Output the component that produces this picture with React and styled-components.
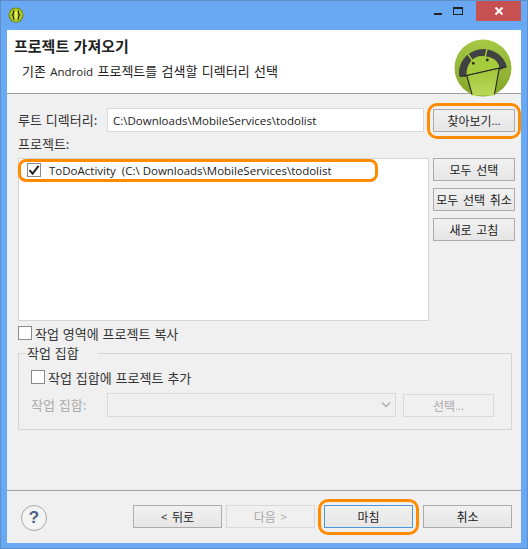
import React from "react";
import styled, { createGlobalStyle, css } from "styled-components";

const Global = createGlobalStyle`
  html, body { margin: 0; padding: 0; background: #69a9f3; }
  * { box-sizing: border-box; }
`;

const Frame = styled.div`
  width: 528px;
  height: 549px;
  background: #69a9f3;
  border: 1px solid #5f8fc9;
  display: flex;
  flex-direction: column;
  font-family: "Noto Sans CJK KR", "Open Sans", sans-serif;
  font-size: 13px;
  word-spacing: 1px;
  color: #222;
  overflow: hidden;
`;
const Latin = styled.span`
  font-family: "Open Sans", sans-serif;
  font-size: 11.5px;
  word-spacing: 0;
`;
const TitleBar = styled.div`
  height: 29px;
  flex: none;
  display: flex;
  align-items: flex-start;
  padding-left: 7px;
`;
const AppIcon = styled.svg`
  width: 16px;
  height: 16px;
  margin-top: 6px;
`;
const WindowControls = styled.div`
  margin-left: auto;
  margin-right: 6px;
  display: flex;
  align-items: flex-start;
`;
const ControlBtn = styled.div`
  width: ${(p) => p.$w}px;
  height: 20px;
  display: flex;
  align-items: center;
  justify-content: center;
  background: ${(p) => p.$bg || "transparent"};
`;
const Client = styled.div`
  width: 514px;
  height: 513px;
  margin-left: 6px;
  flex: none;
  background: #f0f0f0;
  display: flex;
  flex-direction: column;
`;
const Header = styled.div`
  height: 64px;
  flex: none;
  background: #fff;
  border-bottom: 1px solid #a0a0a0;
  display: flex;
  justify-content: space-between;
  padding: 7px 9px 0 7px;
`;
const HeadText = styled.div`
  display: flex;
  flex-direction: column;
`;
const Title = styled.div`
  font-weight: 700;
  font-size: 15px;
  line-height: 18px;
  word-spacing: 1px;
`;
const Sub = styled.div`
  margin-top: 7px;
  margin-left: 8px;
  line-height: 18px;
  word-spacing: 1.4px;
`;
const Logo = styled.svg`
  width: 58px;
  height: 58px;
  margin-top: 2px;
`;
const Body = styled.div`
  flex: 1;
  padding: 14px 6px 0 11px;
  display: flex;
  flex-direction: column;
`;
const RootRow = styled.div`
  display: grid;
  grid-template-columns: 89px 317px 91px;
  align-items: center;
  height: 24px;
`;
const Input = styled.div`
  height: 24px;
  background: #fff;
  border: 1px solid #d9d9d9;
  padding-left: 5px;
  line-height: 22px;
  color: #222;
  white-space: nowrap;
`;
const Label = styled.div`
  color: ${(p) => (p.$off ? "#aaa" : "#333")};
  line-height: 16px;
  white-space: nowrap;
`;
const ProjectLabel = styled(Label)`
  margin-top: 4px;
  height: 22px;
`;
const Btn = styled.div`
  position: relative;
  height: 23px;
  display: flex;
  align-items: center;
  justify-content: center;
  white-space: pre;
  font-size: 12px;
  word-spacing: 2px;
  background: ${(p) => (p.$off ? "#f0f0f0" : "linear-gradient(#f1f1f1, #e6e6e6)")};
  border: 1px solid ${(p) => (p.$off ? "#d9d9d9" : p.$focus ? "#4b97e0" : "#acacac")};
  color: ${(p) => (p.$off ? "#a8a8a8" : "#222")};
  ${(p) =>
    p.$ring &&
    css`
      &::after {
        content: "";
        position: absolute;
        left: -7px;
        right: -7px;
        top: -7px;
        bottom: -8px;
        border: 3px solid #ff8c00;
        border-radius: 10px;
      }
    `}
`;
const BrowseBtn = styled(Btn)`
  margin-left: 9px;
  width: 82px;
  margin-top: 1px;
`;
const ListRow = styled.div`
  display: flex;
  gap: 4px;
  height: 163px;
`;
const List = styled.div`
  width: 411px;
  background: #fff;
  border: 1px solid #d5d5d5;
`;
const ListItem = styled.div`
  width: 360px;
  height: 23px;
  margin: 0 0 0 -1px;
  border: 3px solid #ff8c00;
  border-radius: 8px;
  display: flex;
  align-items: center;
  padding: 0 0 1px 6px;
  gap: 8px;
  white-space: pre;
  color: #222;
`;
const Side = styled.div`
  width: 82px;
  display: flex;
  flex-direction: column;
  gap: 7px;
`;
const Box = styled.div`
  width: 14px;
  height: 14px;
  flex: none;
  background: #fff;
  border: 1px solid #8a8a8a;
  display: flex;
  align-items: center;
  justify-content: center;
`;
const CheckRow = styled.div`
  display: flex;
  align-items: center;
  gap: 3px;
  height: 16px;
  color: #333;
  white-space: nowrap;
`;
const CopyRow = styled(CheckRow)`
  margin-top: 4px;
`;
const Group = styled.fieldset`
  margin: 4px 0 0;
  padding: 8px 13px 0 12px;
  width: 494px;
  height: 85px;
  border: 1px solid #d5d5d5;
  min-width: 0;
`;
const Legend = styled.legend`
  margin-left: -5px;
  padding: 0 19px 0 1px;
  line-height: 16px;
  color: #333;
`;
const WorkRow = styled.div`
  display: grid;
  grid-template-columns: 76px 289px 98px;
  align-items: center;
  margin-top: 8px;
  height: 24px;
`;
const Select = styled.div`
  height: 24px;
  border: 1px solid #d9d9d9;
  display: flex;
  align-items: center;
  justify-content: flex-end;
  padding-right: 3px;
`;
const PickBtn = styled(Btn)`
  margin-left: 7px;
  width: 91px;
`;
const Footer = styled.div`
  height: 53px;
  flex: none;
  border-top: 1px solid #a0a0a0;
  display: flex;
  align-items: flex-start;
  padding: 14px 0 0 14px;
`;
const Help = styled.div`
  width: 26px;
  height: 26px;
  border-radius: 50%;
  border: 1px solid #a8a8a8;
  background: #f4f4f4;
  color: #4c5f85;
  font-family: "Liberation Sans", sans-serif;
  font-weight: 700;
  font-size: 17px;
  display: flex;
  align-items: center;
  justify-content: center;
  margin-right: 86px;
`;
const FootButtons = styled.div`
  display: flex;
`;
const FootBtn = styled(Btn)`
  width: 89px;
  margin-left: ${(p) => p.$gap || 0}px;
`;

const Check = () => (
  <svg width="12" height="12" viewBox="0 0 12 12">
    <path d="M1.5 6.2 L4.6 9.6 L10.6 1.8" fill="none" stroke="#222" strokeWidth="2" />
  </svg>
);

const Chevron = () => (
  <svg width="12" height="8" viewBox="0 0 12 8">
    <path d="M2 1.5 L6 5.5 L10 1.5" fill="none" stroke="#aaa" strokeWidth="1.5" />
  </svg>
);

const AndroidLogo = () => (
  <Logo viewBox="0 0 58 58">
    <defs>
      <linearGradient id="g" x1="0" y1="0" x2="0" y2="1">
        <stop offset="0" stopColor="#a5c845" />
        <stop offset="1" stopColor="#85a52a" />
      </linearGradient>
      <linearGradient id="b" x1="0" y1="0" x2="0" y2="1">
        <stop offset="0" stopColor="#9cc63a" />
        <stop offset="1" stopColor="#bcd85a" />
      </linearGradient>
    </defs>
    <circle cx="29" cy="29" r="28.5" fill="url(#g)" />
    <path d="M5 37 A24.5 24.5 0 0 1 53 28 L45.5 31 L12.5 38 Z" fill="#414141" />
    <path d="M12.5 37 L45.5 29.5 L41 56.5 L17.5 56.5 Z" fill="url(#b)" />
    <path d="M12.5 36 C12 25 19 17 28 17 C38 17 44.5 22 45.5 28.5 Z" fill="#a4cc3c" />
    <path d="M6 37.5 L12.5 36.5 L45.5 29 L52 28" fill="none" stroke="#2c2c20" strokeWidth="1" />
    <path d="M12.8 36.5 L18 55.5 M45.3 29 L40.5 55.5" fill="none" stroke="#2c2c20" strokeWidth="1.2" />
    <circle cx="19.3" cy="24.3" r="1.4" fill="#2c2c20" />
    <circle cx="33.3" cy="21" r="1.4" fill="#2c2c20" />
    <path d="M14 15 L18.5 22 M33 10 L31 18.5" stroke="#a4cc3c" strokeWidth="1.4" strokeLinecap="round" />
  </Logo>
);

export default function App() {
  return (
    <Frame>
      <Global />
      <TitleBar>
        <AppIcon viewBox="0 0 16 16">
          <circle cx="8" cy="8" r="7.5" fill="#6f8412" />
          <circle cx="8" cy="8" r="6.4" fill="#b9d11f" />
          <path d="M6.4 3.5 C4.6 4.2 6 7.2 4.5 8 C6 8.8 4.6 11.8 6.4 12.5 M9.6 3.5 C11.4 4.2 10 7.2 11.5 8 C10 8.8 11.4 11.8 9.6 12.5" fill="none" stroke="#27300a" strokeWidth="1.3" />
          <rect x="7" y="4" width="2" height="8" rx="1" fill="#e4ee70" />
        </AppIcon>
        <WindowControls>
          <ControlBtn $w={20}>
            <svg width="10" height="10" viewBox="0 0 10 10">
              <rect x="1" y="7" width="8" height="2" fill="#222" />
            </svg>
          </ControlBtn>
          <ControlBtn $w={20}>
            <svg width="12" height="10" viewBox="0 0 12 10">
              <rect x="1.5" y="1.5" width="9" height="7" fill="none" stroke="#222" />
              <rect x="1" y="1" width="10" height="2" fill="#222" />
            </svg>
          </ControlBtn>
          <ControlBtn $w={8} />
          <ControlBtn $w={45} $bg="#c75050">
            <svg width="10" height="10" viewBox="0 0 10 10">
              <path d="M1.5 1.5 L8.5 8.5 M8.5 1.5 L1.5 8.5" stroke="#fff" strokeWidth="2" />
            </svg>
          </ControlBtn>
        </WindowControls>
      </TitleBar>
      <Client>
        <Header>
          <HeadText>
            <Title>프로젝트 가져오기</Title>
            <Sub>기존 <Latin>Android</Latin> 프로젝트를 검색할 디렉터리 선택</Sub>
          </HeadText>
          <AndroidLogo />
        </Header>
        <Body>
          <RootRow>
            <Label>루트 디렉터리:</Label>
            <Input><Latin>C:\Downloads\MobileServices\todolist</Latin></Input>
            <BrowseBtn $ring>찾아보기<Latin>...</Latin></BrowseBtn>
          </RootRow>
          <ProjectLabel>프로젝트:</ProjectLabel>
          <ListRow>
            <List>
              <ListItem>
                <Box>
                  <Check />
                </Box>
                <Latin>ToDoActivity  (C:\ Downloads\MobileServices\todolist</Latin>
              </ListItem>
            </List>
            <Side>
              <Btn>모두 선택</Btn>
              <Btn>모두 선택 취소</Btn>
              <Btn>새로 고침</Btn>
            </Side>
          </ListRow>
          <CopyRow>
            <Box />
            <span>작업 영역에 프로젝트 복사</span>
          </CopyRow>
          <Group>
            <Legend>작업 집합</Legend>
            <CheckRow>
              <Box />
              <span>작업 집합에 프로젝트 추가</span>
            </CheckRow>
            <WorkRow>
              <Label $off>작업 집합:</Label>
              <Select>
                <Chevron />
              </Select>
              <PickBtn $off>선택<Latin>...</Latin></PickBtn>
            </WorkRow>
          </Group>
        </Body>
        <Footer>
          <Help>?</Help>
          <FootButtons>
            <FootBtn><Latin>&lt;</Latin> 뒤로</FootBtn>
            <FootBtn $gap={4} $off>다음 <Latin>&gt;</Latin></FootBtn>
            <FootBtn $gap={9} $focus $ring>마침</FootBtn>
            <FootBtn $gap={10}>취소</FootBtn>
          </FootButtons>
        </Footer>
      </Client>
    </Frame>
  );
}
